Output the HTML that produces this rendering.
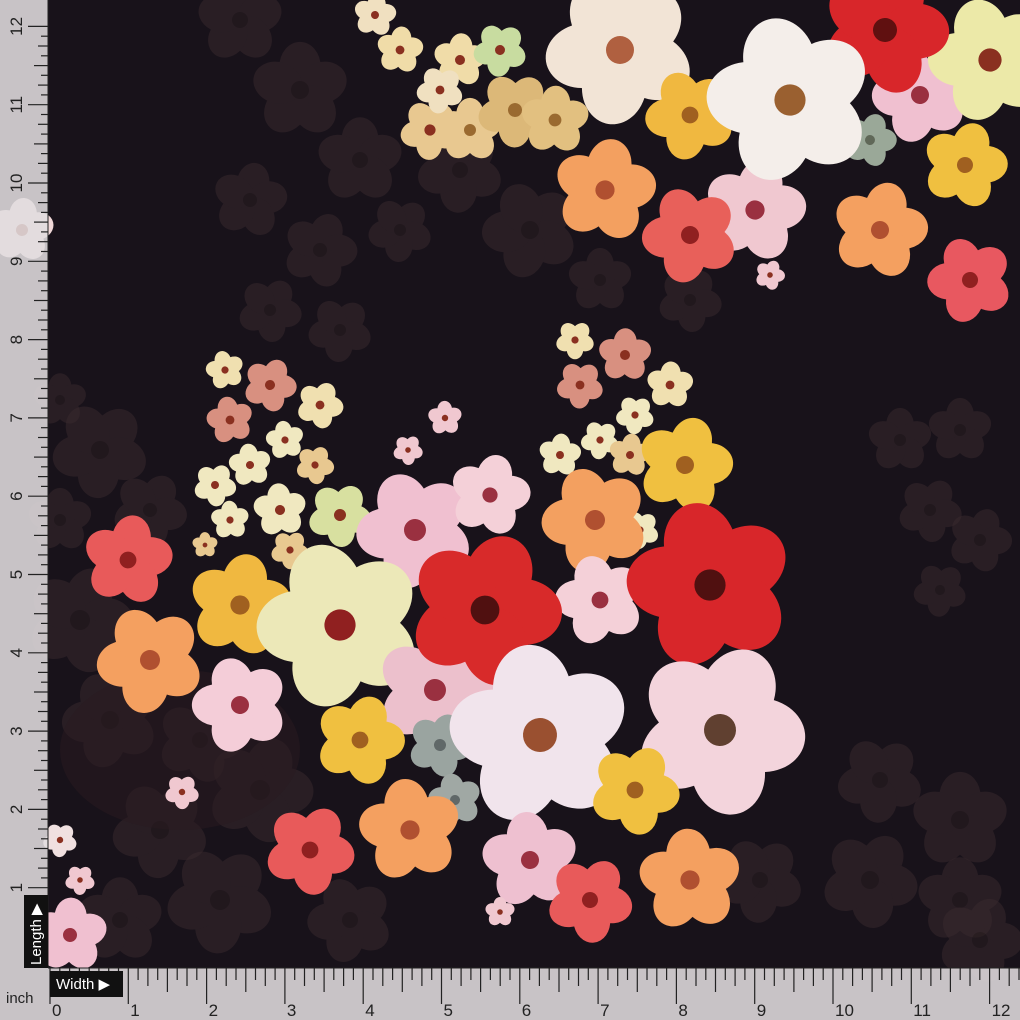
<!DOCTYPE html>
<html><head><meta charset="utf-8"><style>
html,body{margin:0;padding:0;background:#18121a;}
#w{position:relative;width:1020px;height:1020px;overflow:hidden;background:#18121a;font-family:"Liberation Sans",sans-serif;}
svg{position:absolute;left:0;top:0}
</style></head><body><div id="w">
<svg id="s" width="1020" height="1020" viewBox="0 0 1020 1020"></svg>
</div>
<script>
var s=document.getElementById('s'),h='';
h+='<rect width="1020" height="1020" fill="#18121a"/>';
function fl(x,y,r,c,cc,op,rot){
  op=op||1;rot=rot||0;var g='<g opacity="'+op+'" transform="translate('+x+','+y+') rotate('+rot+')">';
  for(var i=0;i<5;i++){var a=i*72;g+='<ellipse cx="0" cy="'+(-r*0.52)+'" rx="'+(r*0.46)+'" ry="'+(r*0.55)+'" fill="'+c+'" transform="rotate('+a+')"/>';}
  g+='<circle r="'+(r*0.2)+'" fill="'+(cc||'#8a3020')+'"/></g>';h+=g;}
var dk=[[240,20,40],[300,90,45],[360,160,40],[250,200,35],[320,250,35],[400,230,30],[270,310,30],[340,330,30],[530,230,45],[600,280,30],[690,300,30],[100,450,45],[150,510,35],[80,620,50],[110,720,45],[200,740,40],[260,790,50],[160,830,45],[220,900,50],[120,920,40],[350,920,40],[760,880,40],[880,780,40],[960,820,45],[870,880,45],[960,900,40],[900,440,30],[960,430,30],[930,510,30],[980,540,30],[940,590,25],[460,170,40],[60,400,25],[60,520,30],[980,940,40]];
dk.forEach(function(d){fl(d[0],d[1],d[2],'#3a2a2e','#2a1e20',0.5,d[0]%60);});
h+='<ellipse cx="180" cy="750" rx="120" ry="80" fill="#2a1a1f" opacity=".5"/>';
var F=[
[470,130,30,'#e8c890','#9a6a30'],[515,110,35,'#dcb878','#9a6a30'],[555,120,32,'#e2c080','#9a6a30'],[430,130,28,'#e8c890'],[460,60,25,'#f0dca8'],[500,50,25,'#c8dca0'],[400,50,22,'#f0dca8'],[440,90,22,'#f0e0c0'],[375,15,20,'#f0e0c0'],
[620,50,70,'#f2e4d6','#b06040'],[605,190,48,'#f3a060','#b05030'],[690,115,42,'#f0b840','#a06020'],[755,210,48,'#f0c8d0','#9a3040'],[690,235,45,'#e8605a','#902020'],
[880,230,45,'#f4a060','#b05030'],[970,280,40,'#e85860','#902020'],[965,165,40,'#f0c040','#a06020'],[920,95,45,'#f0c0d0','#9a3040'],[870,140,25,'#9aa898','#606858'],
[990,60,58,'#ece9a8','#8a3020'],[885,30,60,'#d8262a','#601010'],[790,100,78,'#f4eeea','#9a6030'],[770,275,14,'#f0c8d0'],
[225,370,18,'#f0e0b0'],[270,385,25,'#d89080'],[230,420,22,'#d89080'],[320,405,22,'#f0e0b0'],[285,440,18,'#f0e8c0'],[315,465,18,'#e8c890'],[250,465,20,'#f0e8c0'],[215,485,20,'#f0e8c0'],[280,510,25,'#f0e8c0'],[340,515,30,'#d8e0a0'],[230,520,18,'#f0e8c0'],[290,550,18,'#e8c890'],[205,545,12,'#e8c890'],
[575,340,18,'#f0e0b0'],[625,355,25,'#d89080'],[580,385,22,'#d89080'],[670,385,22,'#f0e0b0'],[635,415,18,'#f0e8c0'],[560,455,20,'#f0e8c0'],[600,440,18,'#f0e8c0'],[630,455,20,'#e8c890'],[640,530,18,'#f0e8c0'],
[128,560,42,'#e85a5a','#902020'],[150,660,50,'#f4a060','#b05030'],[240,605,48,'#f0b840','#a06020'],
[415,530,55,'#f0c0d0','#9a3040'],[490,495,38,'#f4d0d8','#9a3040'],[595,520,50,'#f3a060','#b05030'],[685,465,45,'#f0c040','#a06020'],
[340,625,78,'#ece8b8','#902020'],[435,690,55,'#ecc0cc','#9a3040'],[240,705,45,'#f4cdd8','#9a3040'],[360,740,42,'#f0c040','#a06020'],
[600,600,42,'#f4d0d8','#9a3040'],[485,610,72,'#d82a2a','#501010'],[710,585,78,'#d8262a','#501010'],
[440,745,30,'#9aa4a0','#606868'],[455,800,25,'#a0a8a4','#606868'],
[720,730,80,'#f3d4dc','#604030'],[540,735,85,'#f1e4ec','#9a5030'],[635,790,42,'#f0c040','#a06020'],
[410,830,48,'#f4a060','#b05030'],[310,850,42,'#e85a5a','#902020'],[530,860,45,'#eec0d0','#9a3040'],[590,900,40,'#e85a5a','#902020'],[690,880,48,'#f4a060','#b05030'],
[408,450,14,'#f0c8d0'],[445,418,16,'#f0c8d0'],[182,792,16,'#f0c8d0'],[500,912,14,'#f0c8d0'],[80,880,14,'#f0c8d0'],[70,935,35,'#f0c0d0','#9a3040'],[60,840,16,'#f0e0e0'],[22,230,30,'#f0d8d8']
];
F.forEach(function(f,i){fl(f[0],f[1],f[2],f[3],f[4],1,(i*37)%72);});
var L='<rect x="0" y="0" width="48" height="968" fill="#e0dcde" opacity=".88"/>';
L+='<rect x="0" y="968" width="1020" height="52" fill="#e0dcde" opacity=".88"/>';
L+='<line x1="48" y1="0" x2="48" y2="968" stroke="#222" stroke-width="1"/>';
L+='<line x1="48" y1="968" x2="1020" y2="968" stroke="#222" stroke-width="1"/>';
var ppi=78.3;
for(var i=0;i<=12*8;i++){var y=966-i*ppi/8;if(y<0)break;var len=i%8==0?20:(i%4==0?14:(i%2==0?10:7));
 L+='<line x1="'+(48-len)+'" y1="'+y.toFixed(1)+'" x2="48" y2="'+y.toFixed(1)+'" stroke="#222" stroke-width="1.2"/>';
 if(i%8==0&&i>0)L+='<text x="14" y="'+(y+8)+'" font-size="17" fill="#222" transform="rotate(-90 14 '+y+')" text-anchor="middle">'+(i/8)+'</text>';}
for(var i=0;i<=13*8;i++){var x=50+i*ppi/8;if(x>1020)break;var len=i%8==0?36:(i%4==0?24:(i%2==0?18:12));
 L+='<line x1="'+x.toFixed(1)+'" y1="968" x2="'+x.toFixed(1)+'" y2="'+(968+len)+'" stroke="#222" stroke-width="1.2"/>';
 if(i%8==0)L+='<text x="'+(x+2)+'" y="1016" font-size="17" fill="#222">'+(i/8)+'</text>';}
L+='<rect x="24" y="895" width="24" height="73" fill="#111"/>';
L+='<text x="41" y="965" font-size="15" fill="#fff" transform="rotate(-90 41 965)">Length ▶</text>';
L+='<rect x="50" y="971" width="73" height="26" fill="#111"/>';
L+='<text x="56" y="989" font-size="15" fill="#fff">Width ▶</text>';
L+='<text x="6" y="1003" font-size="15" fill="#222">inch</text>';
h+=L;s.innerHTML=h;
</script>
</body></html>
